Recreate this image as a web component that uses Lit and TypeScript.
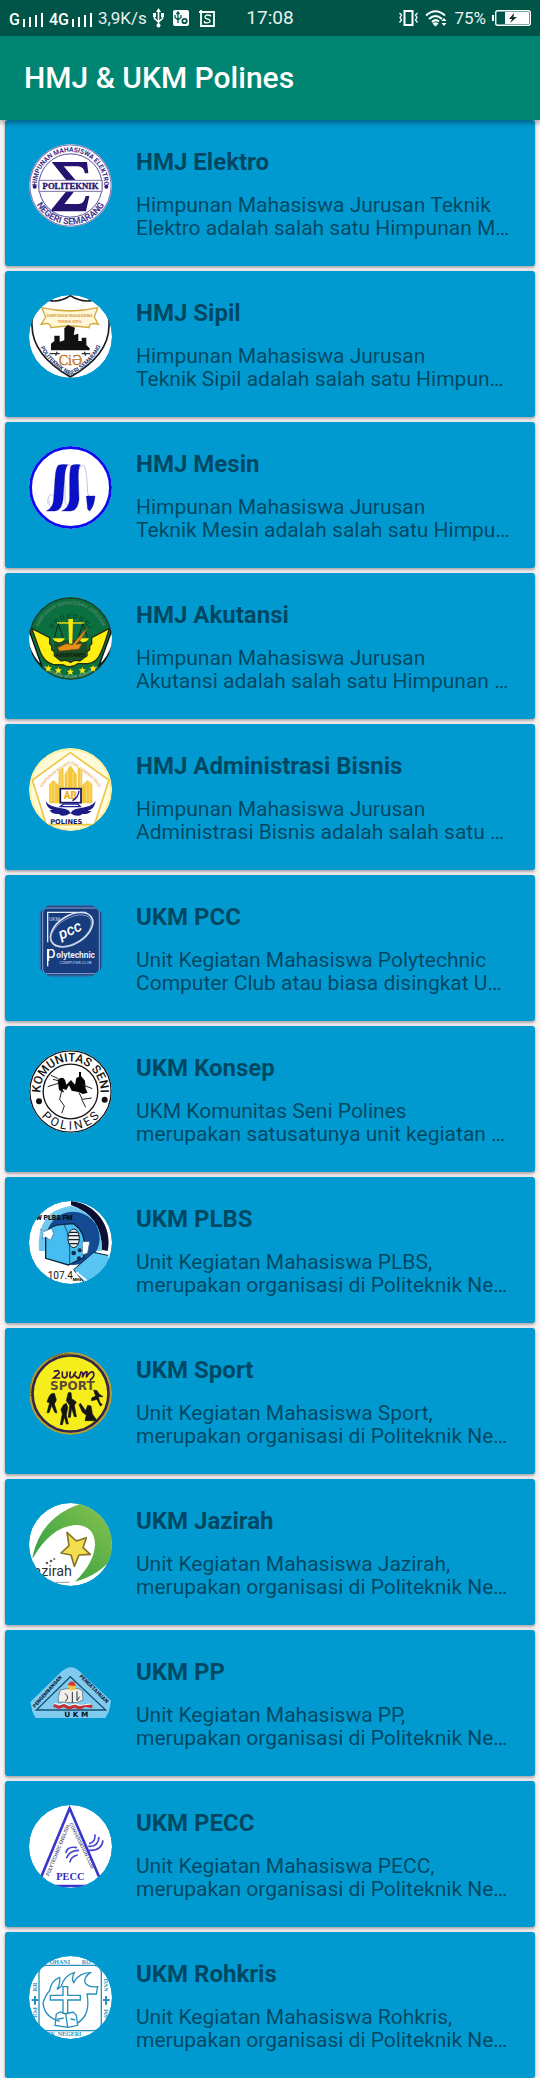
import { LitElement, html, svg, css, SVGTemplateResult } from "lit";
import { customElement, property } from "lit/decorators.js";

interface Org {
  logo: string;
  name: string;
  lines: [string, string];
}

const ORGS: Org[] = [
  { logo: "elektro", name: "HMJ Elektro", lines: ["Himpunan Mahasiswa Jurusan Teknik", "Elektro adalah salah satu Himpunan M…"] },
  { logo: "sipil", name: "HMJ Sipil", lines: ["Himpunan Mahasiswa Jurusan", "Teknik Sipil adalah salah satu Himpun…"] },
  { logo: "mesin", name: "HMJ Mesin", lines: ["Himpunan Mahasiswa Jurusan", "Teknik Mesin adalah salah satu Himpu…"] },
  { logo: "akutansi", name: "HMJ Akutansi", lines: ["Himpunan Mahasiswa Jurusan", "Akutansi adalah salah satu Himpunan …"] },
  { logo: "bisnis", name: "HMJ Administrasi Bisnis", lines: ["Himpunan Mahasiswa Jurusan", "Administrasi Bisnis adalah salah satu …"] },
  { logo: "pcc", name: "UKM PCC", lines: ["Unit Kegiatan Mahasiswa Polytechnic", "Computer Club atau biasa disingkat U…"] },
  { logo: "konsep", name: "UKM Konsep", lines: ["UKM Komunitas Seni Polines", "merupakan satusatunya unit kegiatan …"] },
  { logo: "plbs", name: "UKM PLBS", lines: ["Unit Kegiatan Mahasiswa PLBS,", "merupakan organisasi di Politeknik Ne…"] },
  { logo: "sport", name: "UKM Sport", lines: ["Unit Kegiatan Mahasiswa Sport,", "merupakan organisasi di Politeknik Ne…"] },
  { logo: "jazirah", name: "UKM Jazirah", lines: ["Unit Kegiatan Mahasiswa Jazirah,", "merupakan organisasi di Politeknik Ne…"] },
  { logo: "pp", name: "UKM PP", lines: ["Unit Kegiatan Mahasiswa PP,", "merupakan organisasi di Politeknik Ne…"] },
  { logo: "pecc", name: "UKM PECC", lines: ["Unit Kegiatan Mahasiswa PECC,", "merupakan organisasi di Politeknik Ne…"] },
  { logo: "rohkris", name: "UKM Rohkris", lines: ["Unit Kegiatan Mahasiswa Rohkris,", "merupakan organisasi di Politeknik Ne…"] },
];

const C = 124.5;

/** Text centred on the top or bottom of a 260° arc around the logo's centre. */
const arcText = (id: string, r: number, lower: boolean, text: string, size: number, fill: string, weight = 700) => {
  const dx = r * 0.766;
  const y = C + (lower ? -1 : 1) * r * 0.643;
  return svg`
  <path id=${id} fill="none" d=${`M${C - dx} ${y}A${r} ${r} 0 1 ${lower ? 0 : 1} ${C + dx} ${y}`} />
  <text font-size=${size} font-weight=${weight} fill=${fill} text-anchor="middle">
    <textPath href=${"#" + id} startOffset="50%">${text}</textPath>
  </text>`;
};

const disc = (fill: string) => svg`<circle cx="124.5" cy="124.5" r="124.5" fill=${fill} />`;

const LOGOS: Record<string, SVGTemplateResult> = {
  elektro: svg`
    ${disc("#fff")}
    <circle cx="124.5" cy="124.5" r="122" fill="none" stroke="#8d83b5" stroke-width="4" />
    <circle cx="124.5" cy="124.5" r="95" fill="none" stroke="#5a4c98" stroke-width="3" />
    ${arcText("elektro-t", 101, false, "HIMPUNAN MAHASISWA ELEKTRO", 20, "#3b2c85")}
    ${arcText("elektro-b", 117, true, "NEGERI SEMARANG", 27, "#4a3c90")}
    <circle cx="17" cy="128" r="6" fill="#2c1a78" /><circle cx="232" cy="128" r="6" fill="#2c1a78" />
    <path fill="#26126f" d="M68 54H174L178 88H168Q164 67 146 67H104L140 109H112ZM112 142H136L106 180H150Q166 178 170 156H181L171 202H68V196Z" />
    <rect x="30" y="109" width="189" height="33" fill="#fff" stroke="#7d72a8" stroke-width="3" />
    <text x="124.5" y="134" font-size="26" font-weight="900" fill="#26126f" stroke="#26126f" text-anchor="middle" class="serif">POLITEKNIK</text>`,
  sipil: svg`
    ${disc("#fff")}
    <path fill="none" stroke="#1c1c24" stroke-width="5" d="M62 17Q96 22 124 2Q154 22 188 17M32 33Q6 50 9 92Q10 180 124 246Q240 180 240 92Q243 50 216 33" />
    <path fill="#fff8d8" stroke="#d3a93c" stroke-width="4" d="M38 38Q124 58 206 38L196 66L208 88Q180 80 180 98Q124 88 66 98Q66 80 36 88L50 66Z" />
    <text x="122" y="66" font-size="12" font-weight="700" fill="#e09a54" text-anchor="middle">HIMPUNAN MAHASISWA</text>
    <text x="122" y="84" font-size="12" font-weight="700" fill="#e09a54" text-anchor="middle">TEKNIK SIPIL</text>
    <path fill="#111" d="M66 166V146L76 138V122H92V140L106 136V100L116 90L138 98L134 120L148 116V138H158V128H172V150L182 160V166Z" />
    <path stroke="#333" stroke-width="4" fill="none" d="M62 176H92M158 176H184M84 170L80 182M166 170L170 182" />
    <text x="124" y="210" font-size="42" fill="#dd8b33" stroke="#a35c1b" text-anchor="middle" class="serif">CiƏ</text>
    <path id="sipil-b" fill="none" d="M28 136Q40 196 124 242Q206 198 222 132" />
    <text font-size="17" font-weight="700" fill="#26386b" text-anchor="middle"><textPath href="#sipil-b" startOffset="50%">POLITEKNIK NEGERI SEMARANG</textPath></text>`,
  mesin: svg`
    ${disc("#fff")}
    <circle cx="124.5" cy="124.5" r="120" fill="none" stroke="#0d0df0" stroke-width="9" />
    <g fill="none" stroke="#a6a6cf" stroke-width="2">
      <path d="M56 172Q56 146 68 146Q80 146 78 170Q74 190 64 182Q56 174 62 164M102 98Q108 56 120 56Q130 60 132 120L136 170Q142 192 148 160M150 70Q156 54 166 60Q174 80 176 140Q184 172 192 150M104 60Q110 120 108 168Q116 190 124 160" />
    </g>
    <path fill="#0a12c8" stroke="#00007c" stroke-width="1" d="M88 58Q96 54 116 56Q108 64 106 100L102 160Q98 194 78 195H52Q72 186 74 160L78 100Q80 66 88 58ZM128 58Q136 54 154 56Q147 64 148 100L150 160Q146 194 126 195H98Q120 186 122 160L122 100Q122 66 128 58ZM172 150H198Q196 180 182 195L176 190Z" />`,
  akutansi: svg`
    ${disc("#0a7040")}
    <circle cx="124.5" cy="124.5" r="122" fill="none" stroke="#1f3d2c" stroke-width="4" />
    <path fill="#fff" stroke="#111" stroke-width="4" d="M2 104L32 190L38 206Q6 180 -6 124ZM247 104L216 190L210 206Q242 180 256 124Z" />
    ${arcText("aku-1", 102, false, "HIMPUNAN MAHASISWA JURUSAN", 15, "#4b8462")}
    <path fill="none" stroke="#05522e" stroke-width="12" stroke-dasharray="12 8" d="M66 92A66 66 0 0 1 183 92" />
    <path fill="none" stroke="#0a7040" stroke-width="5" stroke-dasharray="6 14" stroke-dashoffset="-3" d="M66 92A66 66 0 0 1 183 92" />
    ${arcText("aku-3", 119, true, "POLITEKNIK NEGERI SEMARANG", 12, "#75a083")}
    <path fill="#ffee12" stroke="#222d10" stroke-width="4" d="M8 94L62 122V140L68 146V158L76 164V176L96 192Q112 186 124 196Q138 186 152 192L174 176V164L182 158V146L188 140V122L241 94Q228 138 216 166Q204 198 176 200H146Q126 216 104 204L72 202Q46 196 34 166Z" />
    <path fill="#1b4d26" d="M76 130H174V178L154 188H96L76 176Z" />
    <text x="124.5" y="180" font-size="16" font-weight="700" fill="#101a10" text-anchor="middle">AKUNTANSI</text>
    <path fill="none" stroke="#f0d80e" stroke-width="4" d="M84 78H166M124 68V134" />
    <path fill="none" stroke="#10281a" stroke-width="3" d="M88 80L76 122M88 80L102 122M162 80L148 122M162 80L176 122" />
    <path fill="#ffe80e" d="M118 66H132L130 140H120ZM70 124H108Q102 136 88 136Q76 134 70 124ZM144 124H180Q174 136 160 136ZM58 204l3 7 8 0-6 5 2 8-7-4-7 4 2-8-6-5 8 0ZM88 210l3 7 8 0-6 5 2 8-7-4-7 4 2-8-6-5 8 0ZM124 214l3 7 8 0-6 5 2 8-7-4-7 4 2-8-6-5 8 0ZM160 210l3 7 8 0-6 5 2 8-7-4-7 4 2-8-6-5 8 0ZM192 204l3 7 8 0-6 5 2 8-7-4-7 4 2-8-6-5 8 0Z" />
    <path fill="#e98f18" stroke="#8f5610" stroke-width="2" d="M86 152L112 140L130 144L174 92Q162 124 140 142L158 140L150 156L92 162Z" />`,
  bisnis: svg`
    ${disc("#fffbd8")}
    <circle cx="124.5" cy="124.5" r="121" fill="none" stroke="#fff0a0" stroke-width="6" />
    <path fill="#fff" stroke="#edc645" stroke-width="5" d="M124 14L240 96L196 230H52L10 96Z" />
    <path id="bis-t" fill="none" d="M38 130Q36 100 124 46Q212 100 212 130" />
    <text font-size="12" font-weight="700" fill="#efb878" text-anchor="middle"><textPath href="#bis-t" startOffset="50%">HIMPUNAN MAHASISWA ADMINISTRASI</textPath></text>
    <path fill="#f4c63c" stroke="#fff3c8" stroke-width="2" d="M60 166V108L74 96L88 110V68L104 56V54L106 166ZM146 166V54L160 66V110L176 96L190 108V166ZM106 130V80L124 50L144 80V130Z" />
    <path stroke="#fbe7a6" stroke-width="2" d="M68 104V160M76 104V160M96 66V160M116 70V120M132 70V120M154 66V160M172 104V160M182 104V160" />
    <rect x="94" y="122" width="62" height="42" fill="#fff" stroke="#15155e" stroke-width="5" />
    <text x="124" y="154" font-size="30" font-weight="900" fill="#f0b21e" text-anchor="middle">AB</text>
    <path fill="none" stroke="#20209a" stroke-width="4" d="M130 158Q148 150 150 128M104 168H146L154 176H94Z" />
    <path fill="#1b1c86" d="M50 160Q60 178 106 182Q122 186 125 196Q128 186 144 182Q188 178 200 160Q196 184 176 188Q186 190 188 188Q178 200 160 198Q146 210 124 196Q102 210 90 198Q68 200 62 186L72 186Q52 180 50 160Z" />
    <text x="112" y="228" font-size="20" font-weight="900" fill="#17175e" text-anchor="middle" class="wide">POLINES</text>`,
  pcc: svg`
    <rect x="34" y="20" width="184" height="211" rx="22" fill="#173d7e" stroke="#356da8" stroke-width="4" />
    <rect x="41" y="27" width="170" height="197" rx="14" fill="none" stroke="#90a6cc" stroke-width="3" />
    <path fill="none" stroke="#e5ebf5" stroke-width="4" d="M56 130V40H172" />
    <text x="60" y="66" font-size="15" fill="#cfdaee">UKM</text>
    <ellipse cx="128" cy="92" rx="70" ry="42" transform="rotate(-32 128 92)" fill="none" stroke="#dce4f2" stroke-width="5" />
    <ellipse cx="126" cy="96" rx="68" ry="38" transform="rotate(-32 126 96)" fill="none" stroke="#aab9d8" stroke-width="2" />
    <text x="96" y="122" font-size="46" font-style="italic" font-weight="500" fill="#fff" transform="rotate(-24 96 122)">pcc</text>
    <text x="52" y="178" font-size="50" fill="#fff">p</text>
    <text x="82" y="178" font-size="25" font-weight="700" fill="#e8eef8">olytechnic</text>
    <text x="92" y="194" font-size="12" fill="#c8d4ea">COMPUTER CLUB</text>
    <path stroke="#fff" stroke-width="4" d="M56 150V202" />`,
  konsep: svg`
    ${disc("#fff")}
    <circle cx="124.5" cy="124.5" r="122" fill="none" stroke="#151515" stroke-width="4" />
    <circle cx="124.5" cy="124.5" r="82" fill="none" stroke="#151515" stroke-width="4" />
    ${arcText("kon-t", 90, false, "KOMUNITAS SENI", 36, "#111", 500)}
    ${arcText("kon-b", 115, true, "P O L I N E S", 36, "#111", 400)}
    <circle cx="30" cy="154" r="9" fill="#111" /><circle cx="227" cy="149" r="9" fill="#111" />
    <path fill="#050505" d="M86 90Q100 76 108 90L112 104L126 90L138 104L142 84L150 80V66H156V78L168 92L170 116L176 128L162 132L148 126L128 122L120 106L112 120L100 116L106 128L90 120Z" />
    <path fill="none" stroke="#222" stroke-width="3" d="M98 122L92 148L106 168L98 190M150 128L160 148L188 144M158 148L170 172M66 76L88 86M72 88L88 92M56 110L88 100M160 104L190 116" />`,
  plbs: svg`
    ${disc("#fff")}
    <path fill="#0b1033" d="M126 0A124.5 124.5 0 0 1 236 150L218 146Q220 46 126 12Z" />
    <path fill="#6fc8ee" d="M126 14Q220 40 219 150H30Q20 30 126 14Z" />
    <circle cx="132" cy="112" r="80" fill="#144a92" />
    <path fill="#45bdf0" stroke="#0c2540" stroke-width="4" d="M50 96Q66 70 104 70L134 68Q168 92 166 134L164 170L118 192L50 172Z" />
    <path fill="none" stroke="#124e7c" stroke-width="3" d="M104 70Q126 100 122 190" />
    <ellipse cx="134" cy="112" rx="17" ry="28" fill="#e8eef2" stroke="#151a24" stroke-width="3" />
    <path stroke="#151a24" stroke-width="4" fill="none" d="M119 104H150M119 116H150M122 94H146M122 128H146" />
    <path fill="#fff" stroke="#3a6d92" stroke-width="2" d="M34 84L44 92L68 82L74 98L64 118L50 108L40 114L42 98ZM160 122H182L176 156L160 162Z" />
    <circle cx="134" cy="156" r="7" fill="#0b2d4e" /><circle cx="152" cy="148" r="6" fill="#0b2d4e" /><circle cx="150" cy="172" r="6" fill="#0b2d4e" />
    <path fill="#58c5f3" stroke="#0c2540" stroke-width="3" d="M134 206L194 154L250 166V210L186 244L172 252L140 214Z" />
    <path fill="none" stroke="#fff" stroke-width="6" d="M142 214L178 244M240 160L246 190" />
    <text x="20" y="56" font-size="21" font-weight="900" fill="#0a0a12">W PLBS FM</text>
    <text x="56" y="234" font-size="30" fill="#111">107.4</text>
    <text x="131" y="241" font-size="13" font-weight="900" fill="#111">MHz</text>`,
  sport: svg`
    ${disc("#b4a031")}
    <circle cx="124.5" cy="124.5" r="114" fill="#f6ee1c" stroke="#33254e" stroke-width="8" />
    <path id="sport-t" fill="none" d="M34 180A98 98 0 0 1 172 40" />
    <text font-size="13" font-weight="700" fill="#5e561b" text-anchor="middle"><textPath href="#sport-t" startOffset="50%">POLITEKNIK NEGERI SEMARANG</textPath></text>
    <path fill="none" stroke="#3a183e" stroke-width="5" stroke-linecap="round" d="M76 58Q92 52 90 64L74 78H92M100 60V74Q108 82 114 72V60M124 60Q118 84 132 74L140 60M134 68L146 78M150 78L156 60Q164 60 160 76Q168 56 174 60L172 76Q182 58 192 60Q200 72 184 84" />
    <text x="130" y="113" font-size="36" font-weight="700" fill="#5c4d31" text-anchor="middle" class="wide">SPORT</text>
    <g fill="#141414" stroke="#141414" stroke-width="2" stroke-linejoin="round">
      <path d="M66 126L76 124L82 144L76 156L84 182H78L68 160L60 182H54L62 152L54 150L60 134Z" />
      <path d="M104 158L112 154L116 166L112 190L118 216H112L106 194L100 218H94L100 186L96 172Z" />
      <path d="M118 122H126L128 140L142 150L136 160L142 194H136L128 168L124 196H118L122 160L112 146Z" />
      <path d="M176 160L186 162L190 186L204 206H168L172 190L160 180L150 158L154 154L170 176Z" />
      <path d="M194 114L204 116L210 126L222 134L208 134L212 150L220 158L214 162L204 142L188 146V138L200 132Z" />
    </g>`,
  jazirah: svg`
    ${disc("#fff")}
    <defs><linearGradient id="jaz-g" x1="0" y1="1" x2="1" y2="0"><stop offset="0" stop-color="#249a40" /><stop offset="1" stop-color="#8bc34f" /></linearGradient></defs>
    <path fill="url(#jaz-g)" d="M10 164Q34 44 152 3L200 10L252 80V160Q214 216 138 236Q196 180 198 124Q196 66 138 66Q66 72 12 164Z" />
    <path fill="#f5de4e" stroke="#83752a" stroke-width="5" stroke-linejoin="round" d="M114 88L142 114L172 104L162 134L184 154L150 156L136 190L126 156L96 150L120 128Z" />
    <g fill="#5a5a60"><circle cx="66" cy="174" r="4" /><circle cx="76" cy="168" r="3" /><circle cx="54" cy="180" r="4" /></g>
    <text x="129" y="220" font-size="43" fill="#333" text-anchor="end">azirah</text>
    <path fill="none" stroke="#9b9ba0" stroke-width="3" d="M56 238H122" />`,
  pp: svg`
    <path fill="#80cbef" d="M96 54Q126 26 154 54L246 140L238 192H14L4 144Z" />
    <path fill="none" stroke="#16506e" stroke-width="4" d="M124 68L230 168H22Z" />
    <path id="pp-l" fill="none" d="M18 162L100 70" />
    <path id="pp-r" fill="none" d="M150 68L240 156" />
    <text font-size="15" font-weight="900" fill="#0c2637"><textPath href="#pp-l">PENGEMBANGAN</textPath></text>
    <text font-size="16" font-weight="900" fill="#0c2637"><textPath href="#pp-r">PENGETAHUAN</textPath></text>
    <path fill="#f3eeea" stroke="#47606d" stroke-width="2" d="M88 128L94 108L112 104H148L160 110L162 138L142 146L88 144Z" />
    <circle cx="129" cy="98" r="11" fill="#edc83d" /><path fill="#d6382b" d="M116 94Q122 78 136 84L140 96Z" />
    <path fill="none" stroke="#233" stroke-width="3" d="M108 118Q124 132 108 142M130 114V146M144 112V140L152 128" />
    <path fill="none" stroke="#c92f30" stroke-width="9" d="M74 154L90 160L104 154L120 162L136 156L152 162L168 154L190 158" />
    <path fill="none" stroke="#fff" stroke-width="3" d="M76 148L92 152L106 148L122 154L138 150L154 154L184 150" />
    <text x="142" y="189" font-size="22" font-weight="900" fill="#07131b" text-anchor="middle" class="wide">U K M</text>`,
  pecc: svg`
    ${disc("#fff")}
    <path fill="none" stroke="#3a36cc" stroke-width="8" d="M34 222L122 10L214 224M68 243H182" />
    <path id="pecc-l" fill="none" d="M60 214L122 62" />
    <path id="pecc-r" fill="none" d="M120 56L194 206" />
    <text font-size="15" font-weight="500" fill="#55557d"><textPath href="#pecc-l">POLYTECHNIC ENGLISH</textPath></text>
    <text font-size="15" font-weight="500" fill="#55557d"><textPath href="#pecc-r">CONVERSATION CLUB</textPath></text>
    <path fill="none" stroke="#4945cb" stroke-width="5" d="M110 144Q116 122 144 128M112 160Q120 136 150 136M122 172Q126 154 146 150M180 116Q200 112 198 88M178 124Q208 126 210 96M180 136Q218 138 222 106" />
    <text x="124" y="226" font-size="31" font-weight="700" fill="#2f2bc0" text-anchor="middle" class="serif">PECC</text>`,
  rohkris: svg`
    ${disc("#fff")}
    <g fill="none" stroke="#2790bd">
      <rect x="30" y="28" width="187" height="196" rx="22" stroke-width="4" />
      <path stroke-width="4" d="M92 196Q46 184 42 140Q50 116 62 104Q66 74 92 64Q94 84 84 100L96 92Q108 56 136 50Q126 68 134 80Q150 50 184 50Q164 64 168 80Q178 96 206 92L202 114H174Q186 178 144 202" />
      <path stroke-width="4" d="M102 92H116V118H154V132H116V172H102V132H64V118H102ZM82 174L94 168L110 174L132 168L142 178L146 208L116 214L78 208ZM110 174L116 214M84 190L104 186M124 188L138 192" />
      <path stroke-width="6" d="M8 132H28M18 120V146M222 132H242M231 120V146" />
    </g>
    <g font-size="18" font-weight="700" fill="#2f93bd" class="serif">
      <text x="62" y="24">OHANI</text><text x="158" y="24">RO</text>
      <text x="86" y="241">NEGERI</text><text x="58" y="241">IK</text>
      <text transform="translate(24 106) rotate(-90)">KR</text><text transform="translate(11 154) rotate(90)">POL</text>
      <text transform="translate(224 68) rotate(90)">DAN</text><text transform="translate(238 186) rotate(-90)">SM</text>
    </g>`,
};

@customElement("org-logo")
class OrgLogo extends LitElement {
  @property() name = "";
  static styles = css`
    :host { display: block; width: 83px; height: 83px; }
    svg { display: block; width: 100%; height: 100%; border-radius: 50%; overflow: hidden; font-family: Roboto, sans-serif; }
    .serif { font-family: "Liberation Serif", serif; }
    .wide { font-family: "DejaVu Sans", sans-serif; }
  `;
  render() {
    return html`<svg viewBox="0 0 249 249" aria-hidden="true">${LOGOS[this.name]}</svg>`;
  }
}

@customElement("org-card")
class OrgCard extends LitElement {
  @property({ attribute: false }) org!: Org;
  static styles = css`
    :host { display: block; }
    .card {
      display: flex;
      gap: 24px;
      min-height: 146px;
      box-sizing: border-box;
      padding: 24px;
      border-radius: 3px;
      background: #0099d0;
      color: rgba(0, 0, 0, 0.54);
      box-shadow: 0 2px 3px rgba(0, 0, 0, 0.28), 0 0 3px rgba(0, 0, 0, 0.12);
    }
    org-logo { flex: none; }
    .body { min-width: 0; flex: 1; padding-top: 4px; }
    h2 { margin: 0 0 18px; font-size: 24px; line-height: 28px; font-weight: 700; }
    p { margin: 0; font-size: 21px; line-height: 23px; }
    .line { display: block; white-space: nowrap; overflow: hidden; text-overflow: ellipsis; }
  `;
  render() {
    return html`<article class="card">
      <org-logo .name=${this.org.logo}></org-logo>
      <div class="body">
        <h2>${this.org.name}</h2>
        <p>${this.org.lines.map((l) => html`<span class="line">${l}</span>`)}</p>
      </div>
    </article>`;
  }
}

@customElement("status-bar")
class StatusBar extends LitElement {
  static styles = css`
    :host {
      display: grid;
      grid-template-columns: 1fr auto 1fr;
      align-items: center;
      height: 36px;
      padding: 0 9px;
      background: #005548;
      color: #e8f1ef;
      font-size: 17px;
      line-height: 20px;
    }
    .side { display: flex; align-items: center; gap: 6px; }
    .end { justify-content: flex-end; }
    .signal { display: flex; align-items: flex-end; gap: 3px; padding-top: 4px; color: #fff; font-size: 16px; line-height: 16px; font-weight: 500; }
    .pair { display: flex; align-items: center; gap: 10px; margin-left: 3px; }
    .clock { font-size: 19px; }
    svg { display: block; flex: none; fill: none; stroke: #fff; }
    .solid { fill: #fff; stroke: none; }
  `;

  private bars() {
    return html`<svg width="20" height="15" viewBox="0 0 20 15" aria-hidden="true"><path stroke-width="2" d="M1 14V6M7 14V4M13 14V2M19 14V0" /></svg>`;
  }

  render() {
    return html`
      <div class="side">
        <div class="signal"><span>G</span>${this.bars()}</div>
        <div class="signal"><span>4G</span>${this.bars()}</div>
        <span>3,9K/s</span>
        <svg width="11" height="20" viewBox="0 0 11 20"><path stroke-width="1.6" d="M5.500 3V17M1.500 7V10.500L5.500 14L9.500 10.500V7" /><path class="solid" d="M5.500 0L8 4H3ZM0 5H3V9H0ZM8 5H11V9H8Z" /><circle class="solid" cx="5.500" cy="17.500" r="2" /></svg>
        <div class="pair">
          <svg width="16" height="16" viewBox="0 0 16 16"><rect class="solid" width="16" height="16" rx="2" /><g stroke="#005548"><path stroke-width="1.300" d="M5 2V13M2 5V7.500L5 10L8 7.500V5M3.500 4L5 2L6.500 4" /><circle cx="11.500" cy="11" r="2.200" stroke-width="1.800" /></g></svg>
          <svg width="16" height="17" viewBox="0 0 16 17"><path stroke-width="1.800" d="M0 2H15V16H2V0" /><path stroke-width="1.300" d="M11.500 6.500V5.500Q6 4 6 7Q6 8.500 8.500 9Q11.500 9.500 11 11.500Q10 13.500 5.500 12.500V11" /></svg>
        </div>
      </div>
      <div class="clock">17:08</div>
      <div class="side end">
        <svg width="19" height="18" viewBox="0 0 19 18"><rect x="5.500" y="2" width="8" height="14" stroke-width="2" /><path stroke-width="1.300" d="M0.500 4L2.500 6L1 8.500L2.500 11L0.500 13.500M18.500 4L16.500 6L18 8.500L16.500 11L18.500 13.500" /></svg>
        <svg width="24" height="18" viewBox="0 0 24 18"><path stroke-width="2" d="M2 6.500Q11.500 -2 21 6.500M5 10Q11.500 4 18 10M8 13Q11.500 9.500 15 12.500" /><path class="solid" d="M8.500 14.500Q11.500 12 14.500 14.500L11.500 17.500ZM20 9L22.500 12H17.500ZM17.500 14H22.500L20 17Z" /></svg>
        <span>75%</span>
        <svg width="39" height="16" viewBox="0 0 39 16"><rect x="3.700" y="0.700" width="34.600" height="14.600" rx="2" stroke-width="1.400" /><path class="solid" d="M0 5H2V11H0ZM13 2H37V14H13Z" /><path fill="#16342e" stroke="none" d="M22 3L17 9H20L18 13L25 7H21.500Z" /></svg>
      </div>
    `;
  }
}

@customElement("app-root")
class AppRoot extends LitElement {
  static styles = css`
    :host { display: block; background: #f8f3f5; font-family: Roboto, sans-serif; }
    .bar {
      position: relative;
      background: #008573;
      box-shadow: 0 3px 5px rgba(0, 0, 0, 0.35);
    }
    .toolbar { display: flex; align-items: center; height: 84px; padding: 0 24px; }
    h1 { margin: 0; color: #fff; font-size: 30px; line-height: 36px; font-weight: 500; }
    ul { display: grid; gap: 5px; margin: 0; padding: 0 5px; list-style: none; }
  `;
  render() {
    return html`
      <header class="bar">
        <status-bar></status-bar>
        <div class="toolbar"><h1>HMJ &amp; UKM Polines</h1></div>
      </header>
      <main>
        <ul>
          ${ORGS.map((o) => html`<li><org-card .org=${o}></org-card></li>`)}
        </ul>
      </main>
    `;
  }
}
